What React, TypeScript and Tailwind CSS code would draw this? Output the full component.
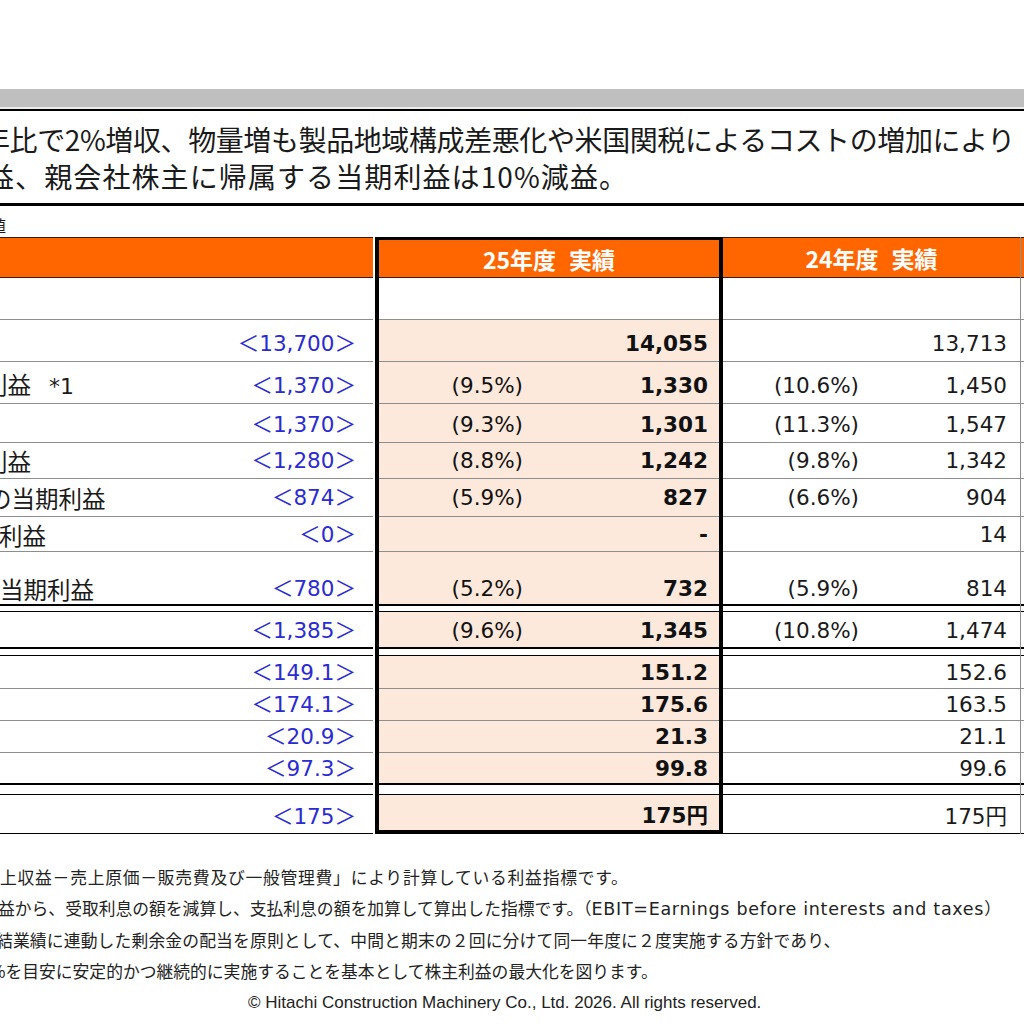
import React from "react";

type R = {
  hc: string;
  bc: string;
  hcB?: string;
  bcB?: string;
  peach: boolean;
  al: string;
  label?: React.ReactNode;
  fc?: string;
  p25?: string;
  v25?: string;
  p24?: string;
  v24?: string;
};

const G = "border-b border-[#8e8e8e]";
const B1 = "border-b border-black";
const B2 = "border-b-2 border-black";

const rows: R[] = [
  { hc: "h-[42px]", bc: G, peach: false, al: "items-center" },
  { hc: "h-[42px]", bc: G, peach: true, al: "items-center pt-[6px]", fc: "13,700", v25: "14,055", v24: "13,713" },
  {
    hc: "h-[42px]",
    bc: G,
    peach: true,
    al: "items-center pt-[6px]",
    label: (
      <span className="ml-[-16px]">
        利益<span className="ml-[18px] font-['DejaVu_Sans',sans-serif] text-[22px]">*1</span>
      </span>
    ),
    fc: "1,370",
    p25: "(9.5%)",
    v25: "1,330",
    p24: "(10.6%)",
    v24: "1,450",
  },
  { hc: "h-[39px]", bc: G, peach: true, al: "items-center pt-[3px]", fc: "1,370", p25: "(9.3%)", v25: "1,301", p24: "(11.3%)", v24: "1,547" },
  {
    hc: "h-[36px]",
    bc: G,
    peach: true,
    al: "items-center pt-[1px]",
    label: <span className="ml-[-16px]">利益</span>,
    fc: "1,280",
    p25: "(8.8%)",
    v25: "1,242",
    p24: "(9.8%)",
    v24: "1,342",
  },
  {
    hc: "h-[38px]",
    bc: G,
    peach: true,
    al: "items-center pt-[1px]",
    label: <span className="ml-[-12px]">の当期利益</span>,
    fc: "874",
    p25: "(5.9%)",
    v25: "827",
    p24: "(6.6%)",
    v24: "904",
  },
  {
    hc: "h-[35px]",
    bc: G,
    peach: true,
    al: "items-center pt-[1px]",
    label: <span className="ml-[-1px]">利益</span>,
    fc: "0",
    v25: "-",
    v24: "14",
  },
  {
    hc: "h-[54px]",
    bc: B2,
    peach: true,
    al: "items-end",
    label: <span>当期利益</span>,
    fc: "780",
    p25: "(5.2%)",
    v25: "732",
    p24: "(5.9%)",
    v24: "814",
  },
  { hc: "h-[6px]", bc: B1, peach: false, al: "items-center" },
  { hc: "h-[37px]", bc: B2, peach: true, al: "items-center pt-[2px]", fc: "1,385", p25: "(9.6%)", v25: "1,345", p24: "(10.8%)", v24: "1,474" },
  { hc: "h-[7px]", bc: B1, peach: false, al: "items-center" },
  { hc: "h-[33px]", bc: G, peach: true, al: "items-center pt-[2px]", fc: "149.1", v25: "151.2", v24: "152.6" },
  { hc: "h-[32px]", bc: G, peach: true, al: "items-center pt-[1px]", fc: "174.1", v25: "175.6", v24: "163.5" },
  { hc: "h-[32px]", bc: G, peach: true, al: "items-center pt-[1px]", fc: "20.9", v25: "21.3", v24: "21.1" },
  { hc: "h-[32px]", bc: B2, peach: true, al: "items-center pt-[1px]", fc: "97.3", v25: "99.8", v24: "99.6" },
  { hc: "h-[10px]", bc: B1, peach: false, al: "items-center" },
  { hc: "h-[39px]", bc: B1, hcB: "h-[35px]", bcB: "", peach: true, al: "items-center pt-[6px]", fc: "175", v25: "175円", v24: "175円" },
];

const NUM = "font-['DejaVu_Sans','Noto_Sans_CJK_JP',sans-serif] text-[21.5px] leading-[30px]";
const HEAD =
  "bg-[#ff6600] flex items-center justify-center text-white font-bold font-['Noto_Sans_CJK_JP',sans-serif] text-[23px] leading-[30px] whitespace-nowrap";

function ColA() {
  return (
    <div className="w-[373px] shrink-0 flex flex-col">
      <div className="h-[41px] border-y border-[#3a1a08] bg-[#ff6600]" />
      {rows.map((r, i) => (
        <div key={i} className={`${r.hc} ${r.bc} flex ${r.al} justify-between pr-[17px] whitespace-nowrap overflow-hidden`}>
          <div className="font-['Noto_Sans_CJK_JP',sans-serif] text-[23.5px] leading-[30px] text-[#1a1a1a]">{r.label}</div>
          {r.fc ? <div className={`${NUM} text-[#2b2bd2]`}>＜{r.fc}＞</div> : null}
        </div>
      ))}
    </div>
  );
}

function ColB() {
  return (
    <div className="w-[348px] shrink-0 flex flex-col border-x-4 border-t-[3px] border-b-4 border-black">
      <div className={`h-[38px] border-b border-[#3a1a08] ${HEAD}`}>
        <span>25年度</span>
        <span className="ml-[13px]">実績</span>
      </div>
      {rows.map((r, i) => (
        <div
          key={i}
          className={`${r.hcB ?? r.hc} ${r.bcB ?? r.bc} ${r.peach ? "bg-[#fde9dc]" : "bg-white"} flex ${r.al} whitespace-nowrap overflow-hidden text-[#111]`}
        >
          <div className={`w-[144px] text-right ${NUM}`}>{r.p25}</div>
          <div className={`flex-1 text-right pr-[11px] font-bold ${NUM}`}>{r.v25}</div>
        </div>
      ))}
    </div>
  );
}

function ColC() {
  return (
    <div className="w-[298px] shrink-0 flex flex-col border-r border-[#8e8e8e]">
      <div className={`h-[41px] border-y border-[#3a1a08] ${HEAD}`}>
        <span>24年度</span>
        <span className="ml-[13px]">実績</span>
      </div>
      {rows.map((r, i) => (
        <div key={i} className={`${r.hc} ${r.bc} flex ${r.al} whitespace-nowrap overflow-hidden text-[#1a1a1a]`}>
          <div className={`w-[136px] text-right ${NUM}`}>{r.p24}</div>
          <div className={`flex-1 text-right pr-[13px] ${NUM}`}>{r.v24}</div>
        </div>
      ))}
    </div>
  );
}

function ColD() {
  return (
    <div className="flex-1 flex flex-col">
      <div className="h-[41px] border-y border-[#3a1a08] bg-[#ff6600]" />
      {rows.map((r, i) => (
        <div key={i} className={`${r.hc} ${r.bc}`} />
      ))}
    </div>
  );
}

export default function App() {
  return (
    <div className="w-[1024px] h-[1024px] overflow-hidden bg-white flex flex-col">
      <div className="h-[89px] shrink-0" />
      <div className="h-[18px] shrink-0 bg-[#bfbfbf]" />
      <div className="h-[2px] shrink-0 bg-[#ececec]" />
      <div className="h-[97px] shrink-0 border-t-2 border-b-[3px] border-black pt-[10px] font-['Noto_Sans_CJK_JP',sans-serif] text-[28px] leading-[37px] whitespace-nowrap text-[#1a1a1a]">
        <div className="tracking-[-0.4px]">
          <span className="ml-[-18px]">年比で2%増収、物量増も製品地域構成差悪化や米国関税によるコストの増加により</span>
        </div>
        <div className="tracking-[1.1px]">
          <span className="ml-[-14px]">益、親会社株主に帰属する当期利益は10%減益。</span>
        </div>
      </div>
      <div className="h-[31px] shrink-0 pt-[9px] font-['Noto_Sans_CJK_JP',sans-serif] text-[16px] leading-[20px] whitespace-nowrap text-[#1a1a1a]">
        <span className="ml-[-10px]">値</span>
      </div>
      <div className="h-[597px] shrink-0 flex">
        <ColA />
        <div className="w-[2px] shrink-0" />
        <ColB />
        <ColC />
        <ColD />
      </div>
      <div className="pt-[28px] font-['Noto_Sans_CJK_JP',sans-serif] text-[16.8px] leading-[31px] whitespace-nowrap text-[#222]">
        <div className="tracking-[0.75px]">上収益－売上原価－販売費及び一般管理費」により計算している利益指標です。</div>
        <div>
          <span className="ml-[-2px]">
            益から、受取利息の額を減算し、支払利息の額を加算して算出した指標です。（
            <span className="font-['DejaVu_Sans',sans-serif] text-[17.5px] tracking-[0.7px]">EBIT=Earnings before interests and taxes</span>）
          </span>
        </div>
        <div className="tracking-[0.15px]">
          <span className="ml-[-4px]">結業績に連動した剰余金の配当を原則として、中間と期末の２回に分けて同一年度に２度実施する方針であり、</span>
        </div>
        <div>
          <span className="ml-[-10px]">%を目安に安定的かつ継続的に実施することを基本として株主利益の最大化を図ります。</span>
        </div>
        <div className="pl-[248px] font-['Liberation_Sans',sans-serif] text-[17px]">
          © Hitachi Construction Machinery Co., Ltd. 2026. All rights reserved.
        </div>
      </div>
    </div>
  );
}
